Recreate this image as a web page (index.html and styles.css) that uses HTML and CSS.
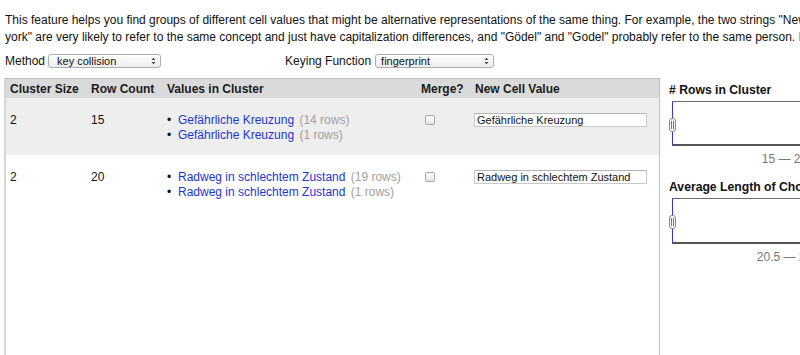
FILE: index.html
```html
<!DOCTYPE html>
<html lang="en">
<head>
  <meta charset="UTF-8">
  <title>Cluster &amp; Edit</title>
  <link rel="stylesheet" href="styles.css">
</head>
<body>
  <div class="dialog">
    <p class="intro">This feature helps you find groups of different cell values that might be alternative representations of the same thing. For example, the two strings "New York" and "new york" are very likely to refer to the same concept and just have capitalization differences, and "Gödel" and "Godel" probably refer to the same person. <a href="#" class="more">Find out more ...</a></p>

    <div class="controls">
      <label class="control">Method
        <span class="select method">
          <select>
            <option>key collision</option>
            <option>nearest neighbor</option>
          </select>
          <svg class="arrows" width="5" height="8" viewBox="0 0 5 8"><path d="M0.5 3 L2.5 0.8 L4.5 3 Z M0.5 5 L2.5 7.2 L4.5 5 Z" fill="#444"/></svg>
        </span>
      </label>
      <label class="control keying">Keying Function
        <span class="select keyfn">
          <select>
            <option>fingerprint</option>
            <option>ngram-fingerprint</option>
            <option>metaphone3</option>
          </select>
          <svg class="arrows" width="5" height="8" viewBox="0 0 5 8"><path d="M0.5 3 L2.5 0.8 L4.5 3 Z M0.5 5 L2.5 7.2 L4.5 5 Z" fill="#444"/></svg>
        </span>
      </label>
    </div>

    <div class="workspace">
      <div class="clusters">
        <table>
          <colgroup>
            <col class="c-size"><col class="c-count"><col class="c-values"><col class="c-merge"><col class="c-new">
          </colgroup>
          <thead>
            <tr>
              <th>Cluster Size</th><th>Row Count</th><th>Values in Cluster</th><th>Merge?</th><th>New Cell Value</th>
            </tr>
          </thead>
          <tbody>
            <tr class="odd">
              <td>2</td>
              <td>15</td>
              <td>
                <ul class="values">
                  <li><a href="#">Gefährliche Kreuzung</a> <span class="count">(14 rows)</span></li>
                  <li><a href="#">Gefährliche Kreuzung</a> <span class="count">(1 rows)</span></li>
                </ul>
              </td>
              <td><input type="checkbox" class="merge"></td>
              <td><input type="text" class="new-value" value="Gefährliche Kreuzung"></td>
            </tr>
            <tr>
              <td>2</td>
              <td>20</td>
              <td>
                <ul class="values">
                  <li><a href="#">Radweg in schlechtem Zustand</a> <span class="count">(19 rows)</span></li>
                  <li><a href="#">Radweg in schlechtem Zustand</a> <span class="count">(1 rows)</span></li>
                </ul>
              </td>
              <td><input type="checkbox" class="merge"></td>
              <td><input type="text" class="new-value" value="Radweg in schlechtem Zustand"></td>
            </tr>
          </tbody>
        </table>
      </div>

      <div class="facets">
        <div class="facet">
          <h3># Rows in Cluster</h3>
          <div class="histogram"><span class="handle"></span></div>
          <div class="range">15 — 20</div>
        </div>
        <div class="facet">
          <h3>Average Length of Choices</h3>
          <div class="histogram"><span class="handle"></span></div>
          <div class="range">20.5 — 28</div>
        </div>
      </div>
    </div>
  </div>
</body>
</html>
```

FILE: styles.css
```css
html, body {
  margin: 0;
  overflow: hidden;
  background: #fff;
}
body {
  font-family: "Liberation Sans", Arial, sans-serif;
  font-size: 12px;
  color: #111;
}
.dialog {
  width: 1200px;
  padding: 0 0 0 4px;
}
.intro {
  width: 898px;
  margin: 12px 0 0 1px;
  font-size: 12px;
  line-height: 17px;
}
.intro .more {
  color: #7a4fc4;
  text-decoration: none;
}

/* method / keying function row */
.controls {
  display: flex;
  align-items: center;
  height: 14px;
  margin: 8px 0 0 1px;
}
.control {
  display: flex;
  align-items: center;
  gap: 3px;
  font-size: 12px;
}
.keying {
  margin-left: 124px;
  gap: 4px;
}
.select {
  position: relative;
  display: inline-block;
}
.select select {
  appearance: none;
  -webkit-appearance: none;
  height: 14px;
  padding: 0 0 0 8px;
  border: 1px solid #adadad;
  border-radius: 3px;
  background: linear-gradient(#ffffff, #ededed);
  font-family: "Liberation Sans", Arial, sans-serif;
  font-size: 11px;
  line-height: 12px;
  color: #111;
}
.method select { width: 113px; }
.keyfn select { width: 119px; padding-left: 5px; }
.arrows {
  position: absolute;
  right: 5px;
  top: 3px;
}

/* clusters table + facets */
.workspace {
  display: flex;
  margin-top: 10px;
  height: 280px;
}
.clusters {
  width: 653px;
  border-left: 2px solid #d6d6d6;
  border-top: 1px solid #bdbdbd;
}
table {
  width: 653px;
  border-collapse: collapse;
  table-layout: fixed;
}
.c-size { width: 81px; }
.c-count { width: 76px; }
.c-values { width: 254px; }
.c-merge { width: 54px; }
th {
  height: 19px;
  padding: 0 4px;
  background: #dadada;
  text-align: left;
  font-weight: bold;
  color: #1a1a1a;
}
td {
  padding: 15px 4px 12px;
  vertical-align: top;
  line-height: 15px;
}
tr.odd td {
  background: #eeeeee;
}
.values {
  list-style: none;
  margin: 0;
  padding: 0;
}
.values li::before {
  content: "•";
  display: inline-block;
  width: 11px;
  color: #111;
}
.values a {
  color: #2236d6;
  text-decoration: none;
}
.count {
  color: #a0a0a0;
  margin-left: 2px;
}
.merge {
  appearance: none;
  -webkit-appearance: none;
  width: 10px;
  height: 10px;
  margin: 2px 0 0 4px;
  border: 1px solid #a8a8a8;
  border-radius: 2px;
  background: linear-gradient(#ffffff, #e4e4e4);
}
.new-value {
  box-sizing: border-box;
  width: 173px;
  height: 14px;
  margin: 0 0 0 -1px;
  padding: 0 2px;
  border: 1px solid #c9c9c9;
  border-top-color: #b5b5b5;
  background: #fff;
  font-family: "Liberation Sans", Arial, sans-serif;
  font-size: 11px;
  color: #111;
}

.facets {
  flex: 1;
  border-left: 1px solid #c2c2c2;
  padding: 4px 0 0 9px;
}
.facet h3 {
  margin: 0 0 3px;
  font-size: 12.2px;
  line-height: 16px;
  color: #111;
}
.facet + .facet {
  margin-top: 12px;
}
.histogram {
  position: relative;
  box-sizing: border-box;
  width: 225px;
  height: 45px;
  margin-left: 3px;
  border-top: 1px solid #6a6a6a;
  border-bottom: 2px solid #555;
  border-left: 1px solid #3434f0;
}
.facet + .facet .histogram {
  height: 46px;
}
.handle {
  position: absolute;
  left: -4px;
  top: 16px;
  box-sizing: border-box;
  width: 7px;
  height: 14px;
  border: 1px solid #8a8a8a;
  border-radius: 3px;
  background: #f8f8f8;
}
.handle::before {
  content: "";
  position: absolute;
  left: 1px;
  top: 2px;
  width: 1px;
  height: 8px;
  border-left: 1px solid #777;
  border-right: 1px solid #777;
}
.range {
  width: 225px;
  margin: 5px 0 0 3px;
  text-align: center;
  color: #777;
  font-size: 12px;
  line-height: 16px;
}
```
